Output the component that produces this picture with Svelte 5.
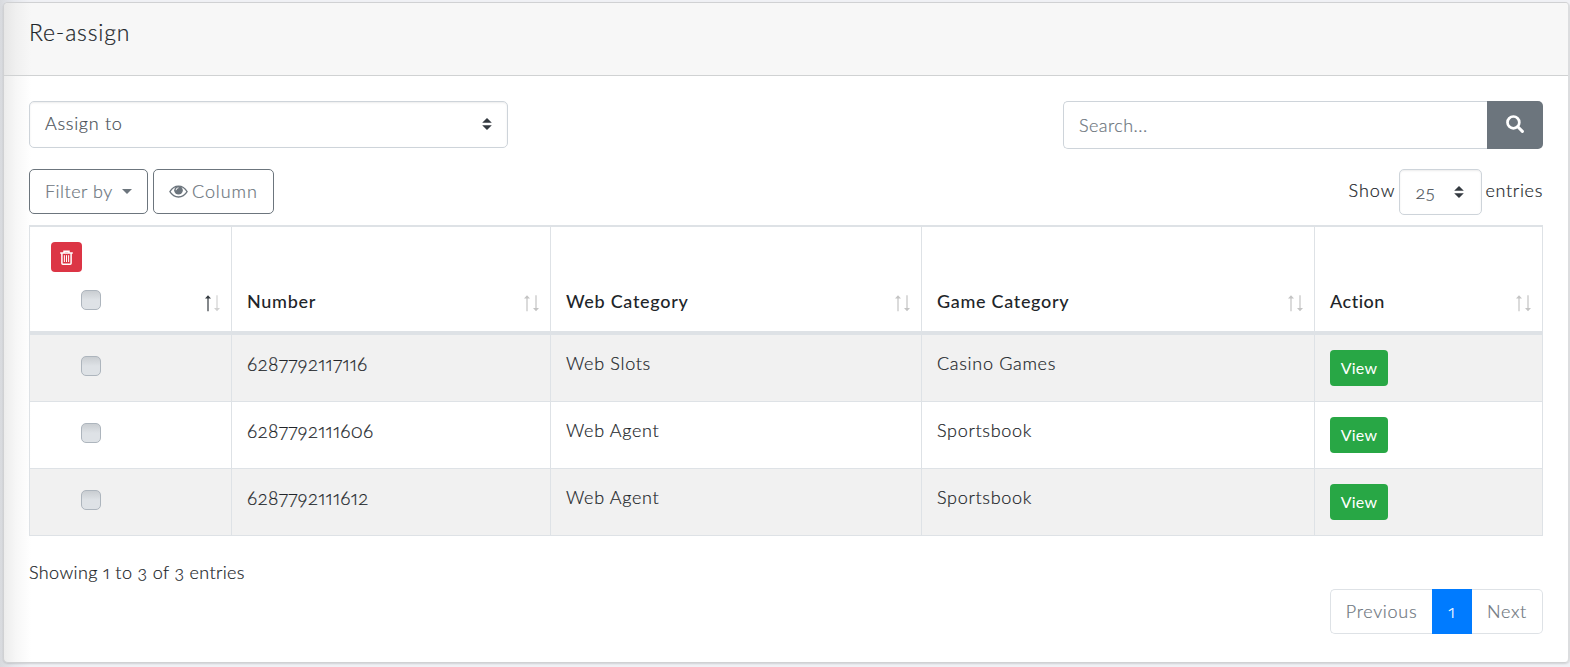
<script>
  const columns = [
    { label: 'Number' },
    { label: 'Web Category' },
    { label: 'Game Category' },
    { label: 'Action' }
  ];
  const rows = [
    { number: '6287792117116', web: 'Web Slots', game: 'Casino Games' },
    { number: '6287792111606', web: 'Web Agent', game: 'Sportsbook' },
    { number: '6287792111612', web: 'Web Agent', game: 'Sportsbook' }
  ];
</script>

{#snippet caret()}
  <svg class="updown" width="10" height="12" viewBox="0 0 4 5"><path fill="#343a40" d="M2 0L0 2h4zm0 5L0 3h4z" /></svg>
{/snippet}

{#snippet sort(active)}
  <svg class="sort" width="17" height="17" viewBox="0 0 17 17">
    <g class:active fill="#c4c4c4"><path d="M4 .3L7 3.6H4.6V16.3H3.4V3.6H1z" /></g>
    <path fill={active ? '#d2d2d2' : '#c4c4c4'} d="M13 16.3L16 13H13.6V.3H12.4V13H10z" />
  </svg>
{/snippet}

<main class="card">
  <header>Re-assign</header>
  <section class="body">
    <div class="bar">
      <div class="select assign"><span>Assign to</span>{@render caret()}</div>
      <div class="search">
        <div class="input"><span>Search...</span></div>
        <button class="go" aria-label="Search">
          <svg width="18" height="18" viewBox="0 0 18 18"><circle cx="7.4" cy="7.4" r="5.9" fill="none" stroke="#fff" stroke-width="2.7" /><path d="M11.8 11.8L16.4 16.4" stroke="#fff" stroke-width="3" stroke-linecap="round" /></svg>
        </button>
      </div>
    </div>
    <div class="bar tools">
      <div class="buttons">
        <button class="outline filter"><span>Filter by</span><i></i></button>
        <button class="outline column">
          <svg width="19" height="13" viewBox="0 0 19 13"><path d="M.9 6.6Q4.2 1.1 9.5 1.1T18.1 6.6Q14.8 12 9.5 12T.9 6.6Z" fill="none" stroke="#6c757d" stroke-width="1.3" /><circle cx="9.5" cy="5.3" r="4.3" fill="#6c757d" /><path d="M7.1 5.2A2.4 2.4 0 0 1 9.5 2.8" fill="none" stroke="#fff" stroke-width=".9" /></svg>
          <span>Column</span>
        </button>
      </div>
      <div class="length"><span class="show">Show</span><div class="select count"><span>25</span>{@render caret()}</div><span class="ent">entries</span></div>
    </div>
    <table>
      <colgroup><col class="c1" /><col class="c2" /><col class="c3" /><col class="c4" /><col class="c5" /></colgroup>
      <thead>
        <tr>
          <th>
            <div class="pick">
              <button class="trash" aria-label="Delete">
                <svg width="13" height="15" viewBox="0 0 13 15" fill="none" stroke="#fff"><path stroke-width="1.5" d="M.2 3.1H12.8M4 3V1.2H9V3M1.9 3V13.3Q1.9 14.2 2.8 14.2H10.2Q11.1 14.2 11.1 13.3V3" /><path d="M4.4 5.2V12M6.5 5.2V12M8.6 5.2V12" /></svg>
              </button>
              <span class="check"></span>
              {@render sort(true)}
            </div>
          </th>
          {#each columns as c}
            <th><div class="head"><span>{c.label}</span>{@render sort(false)}</div></th>
          {/each}
        </tr>
      </thead>
      <tbody>
        {#each rows as r}
          <tr>
            <td class="mark"><span class="check"></span></td>
            <td class="num"><span>{r.number}</span></td>
            <td><span>{r.web}</span></td>
            <td><span>{r.game}</span></td>
            <td><button class="view">View</button></td>
          </tr>
        {/each}
      </tbody>
    </table>
    <p class="info">Showing 1 to 3 of 3 entries</p>
    <nav>
      <span class="prev">Previous</span><span class="current">1</span><span class="next">Next</span>
    </nav>
  </section>
</main>

<style>
  :global(body) {
    background: linear-gradient(90deg, #d8dade 0, #e6e8ed 14px, #f0f1f5 30px);
    overflow: hidden;
  }
  * { box-sizing: border-box; }
  .card {
    width: 1567px;
    height: 661px;
    margin: 2px 0 4px 3px;
    border: 1px solid #d0d1d3;
    border-right: 2px solid #dcdddf;
    border-radius: 5px;
    background: linear-gradient(90deg, #ececec 0, #f7f7f7 12px, #fff 27px);
    box-shadow: 0 1px 2px #0002;
    font: 300 18px/27px Lato, sans-serif;
    font-variant-numeric: oldstyle-nums proportional-nums;
    letter-spacing: .69px;
    -webkit-text-stroke: .2px currentColor;
    color: #212529;
    overflow: hidden;
  }
  header {
    height: 73px;
    padding: 14px 25px;
    border-bottom: 1px solid #d0d2d3;
    background: linear-gradient(90deg, #e6e6e6 0, #f0f0f0 12px, #f7f7f7 27px);
    font-size: 23px;
    line-height: 30px;
    letter-spacing: .8px;
  }
  .body { padding: 25px 24px 0 25px; width: 1563px; }
  .bar { display: flex; justify-content: space-between; height: 48px; }
  .select {
    display: flex;
    align-items: center;
    justify-content: space-between;
    border: 1px solid #ced4da;
    border-radius: 5px;
    background: #fff;
    box-shadow: inset 0 1px 2px #00000013;
    color: #495057;
  }
  .assign { width: 479px; height: 47px; padding: 0 15px 1px; }
  .assign span { padding-bottom: 2px; }
  .search { display: flex; width: 480px; height: 48px; }
  .input {
    flex: 1;
    display: flex;
    align-items: center;
    border: 1px solid #ced4da;
    border-right: 0;
    border-radius: 5px 0 0 5px;
    padding-left: 15px;
    background: #fff;
    color: #6c757d;
    letter-spacing: .45px;
  }
  button { font: inherit; letter-spacing: inherit; border: 0; padding: 0; margin: 0; }
  .go { display: flex; align-items: center; justify-content: center; width: 56px; padding-bottom: 2px; border-radius: 0 5px 5px 0; background: #6c757d; }
  .tools { margin-top: 20px; height: 46px; }
  .buttons { display: flex; gap: 5px; }
  .outline {
    display: flex;
    align-items: center;
    height: 45px;
    border: 1px solid #6c757d;
    border-radius: 5px;
    background: transparent;
    color: #6c757d;
    padding: 0 15px;
  }
  .filter { width: 119px; justify-content: space-between; letter-spacing: .5px; }
  .filter i { border: 5.5px solid transparent; border-top-color: #6c757d; border-bottom: 0; }
  .column { width: 121px; gap: 4px; letter-spacing: .9px; }
  .length { display: flex; align-items: center; height: 46px; }
  .count { width: 83px; height: 46px; margin: 0 3px 0 4px; padding: 0 17px 0 15px; }
  .show, .ent { padding-bottom: 3px; }
  .show { letter-spacing: .95px; }

  table {
    width: 1514px;
    margin-top: 10px;
    table-layout: fixed;
    border-collapse: separate;
    border-spacing: 0;
  }
  .c1 { width: 202px; }
  .c2 { width: 319px; }
  .c3 { width: 371px; }
  .c4 { width: 393px; }
  .c5 { width: 229px; }
  th, td { border-left: 1px solid #dee2e6; padding: 0 10px 0 15px; text-align: left; vertical-align: top; }
  th:last-child, td:last-child { border-right: 1px solid #dee2e6; }
  th { height: 110px; border-top: 2px solid #dee2e6; border-bottom: 4px solid #dee2e6; font-weight: 500; -webkit-text-stroke: 0; }
  th:last-child { letter-spacing: .5px; }
  td { height: 67px; border-bottom: 1px solid #dee2e6; padding-top: 15px; }
  tbody tr:nth-child(odd) td { background: #f1f1f1; }
  .head { display: flex; justify-content: space-between; align-items: flex-end; height: 88px; }
  .pick { display: grid; grid-template-columns: 1fr 17px; grid-template-rows: 30px 58px; padding: 15px 0 0 6px; height: 104px; }
  .trash { grid-column: 1 / 3; display: flex; align-items: center; justify-content: center; width: 31px; height: 30px; border-radius: 4px; background: #dc3545; }
  .check {
    display: block;
    width: 20px;
    height: 20px;
    border: 1px solid #adb5bd;
    border-radius: 5px;
    background: linear-gradient(#c9cdd1, #dee2e6 50%);
  }
  .pick .check { margin: 18px 0 0 30px; }
  .pick .sort { align-self: start; margin-top: 23px; }
  .head .sort { margin-bottom: 3px; }
  .sort { display: block; flex: none; }
  .active { fill: #343a40; }
  .mark .check { margin: 6px 0 0 36px; }
  .num { font-size: 19px; letter-spacing: .3px; }
  .view {
    display: block;
    width: 58px;
    height: 36px;
    padding-bottom: 2px;
    border-radius: 4px;
    background: #28a745;
    color: #fff;
    font-size: 16px;
    font-weight: 400;
    letter-spacing: .25px;
    -webkit-text-stroke: 0;
  }
  .info { margin: 23px 0 3px; letter-spacing: .38px; }
  nav { display: flex; justify-content: flex-end; height: 45px; color: #6c757d; }
  nav span { display: flex; align-items: center; justify-content: center; border: 1px solid #dee2e6; }
  .prev { width: 102px; border-radius: 5px 0 0 5px; border-right: 0; }
  .current { width: 40px; border-color: #007bff; background: #007bff; color: #fff; }
  .next { width: 71px; border-left: 0; border-radius: 0 5px 5px 0; }
</style>
